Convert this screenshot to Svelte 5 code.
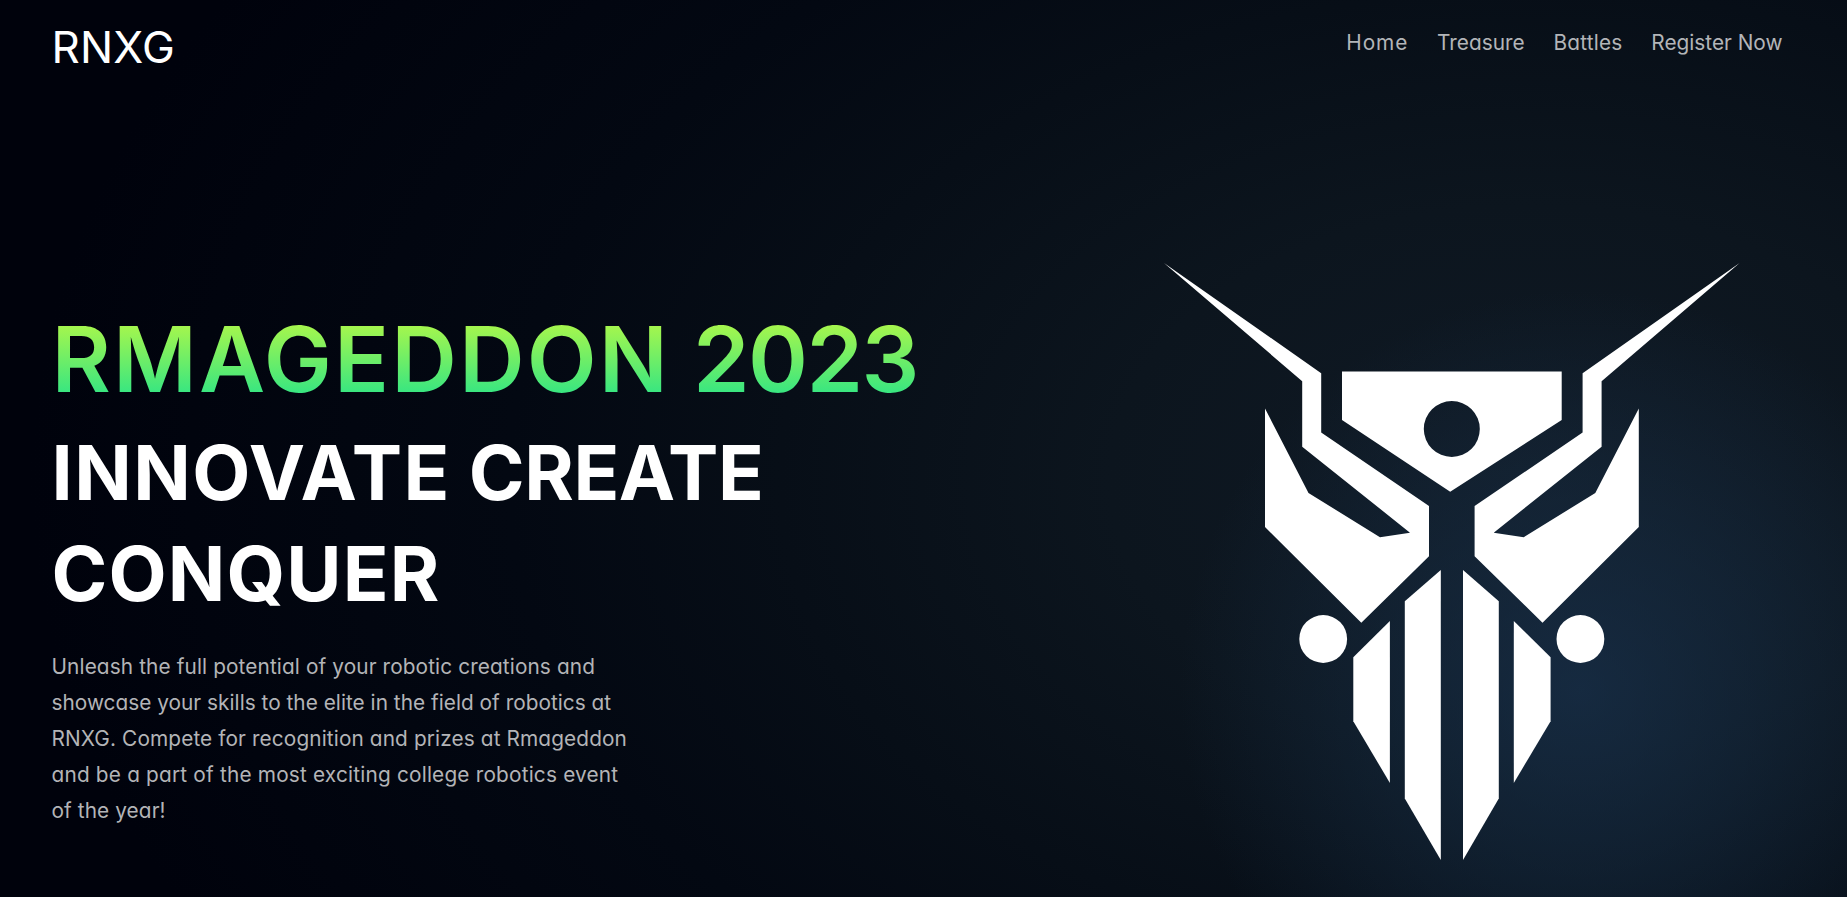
<script>
  const links = [
    { label: 'Home', track: 0.9 },
    { label: 'Treasure', track: 0 },
    { label: 'Battles', track: 0.2 },
    { label: 'Register Now', track: 0 }
  ];
  const slogan = [
    [
      { text: 'INNOVATE', track: 1.45 },
      { text: 'CREATE', track: -0.4 }
    ],
    [{ text: 'CONQUER', track: 1.15 }]
  ];
  const intro = [
    { text: 'Unleash the full potential of your robotic creations and', track: 0.11 },
    { text: 'showcase your skills to the elite in the field of robotics at', track: 0.02 },
    { text: 'RNXG. Compete for recognition and prizes at Rmageddon', track: 0.115 },
    { text: 'and be a part of the most exciting college robotics event', track: 0.19 },
    { text: 'of the year!', track: 0.09 }
  ];
</script>

<div class="page">
  <header>
    <div class="logo">RNXG</div>
    <nav>
      {#each links as link}
        <a href="#top" style="letter-spacing: {link.track}px">{link.label}</a>
      {/each}
    </nav>
  </header>
  <main>
    <section class="copy">
      <h1><span class="name">RMAGEDDON</span> <span class="year">2023</span></h1>
      <h2>
        {#each slogan as line}
          <span class="line">
            {#each line as word}
              <span style="letter-spacing: {word.track}px">{word.text}</span>{' '}
            {/each}
          </span>
        {/each}
      </h2>
      <p>
        {#each intro as line}
          <span class="line" style="letter-spacing: {line.track}px">{line.text}</span>
        {/each}
      </p>
    </section>
    <svg class="emblem" viewBox="1164 263 576 598" width="576" height="598" fill="#fff" aria-hidden="true">
      <path d="M1164 263L1321.2 373.2V432.5L1429 506V556.3L1361.3 622.7L1265 527V408.5L1308.5 493L1380 537.2L1410 532.7L1302.2 446.7V381.2Z" />
      <path d="M1739.6 263L1582.6 373.2V432.5L1474.6 506V556.3L1542.5 622.7L1638.8 527V408.5L1595.3 493L1523.7 537.2L1493.7 532.7L1601.6 446.7V381.2Z" />
      <path fill-rule="evenodd" d="M1342 371.4H1561.7V420L1450.2 491.8L1342 420ZM1451.8 401A28 28 0 1 0 1451.8 457A28 28 0 1 0 1451.8 401Z" />
      <circle cx="1323.2" cy="639" r="23.9" />
      <circle cx="1580.4" cy="639" r="23.9" />
      <path d="M1389.9 621V783L1353.3 721.2V657.3Z" />
      <path d="M1440.8 570V860L1404.8 798.5V601.3Z" />
      <path d="M1463 570L1498.8 601.3V798.5L1463 860Z" />
      <path d="M1513.8 621L1550.6 657.3V721.2L1513.8 783Z" />
    </svg>
  </main>
</div>

<style>
  :global(body) {
    margin: 0;
    background: #00020c;
  }
  .page {
    height: 897px;
    overflow: hidden;
    box-sizing: border-box;
    font-family: Inter, sans-serif;
    font-feature-settings: 'cv11';
    color: #fff;
    background:
      radial-gradient(ellipse 400px 400px at 1580px 690px, rgba(27, 54, 84, 0.62), rgba(25, 50, 76, 0.42) 45%, rgba(22, 42, 66, 0) 100%),
      radial-gradient(ellipse 1500px 980px at 1530px 480px, #101a25 0%, #0c151e 28%, #070e17 50%, #030812 68%, #00020c 100%);
  }
  header {
    display: flex;
    justify-content: space-between;
    height: 100px;
    padding: 0 64.5px 0 51.5px;
    box-sizing: border-box;
  }
  .logo {
    margin-top: 17px;
    font-size: 44px;
    line-height: 60px;
    letter-spacing: 0.2px;
  }
  nav {
    display: flex;
    gap: 28.9px;
    margin-top: 28px;
  }
  nav a {
    color: #b3b5b8;
    font-size: 20.8px;
    line-height: 30px;
    text-decoration: none;
  }
  main {
    display: flex;
    justify-content: space-between;
    padding: 163px 107px 0 51.5px;
  }
  .copy {
    padding-top: 41px;
  }
  h1 {
    margin: 0;
    font-size: 91px;
    font-weight: 600;
    line-height: 110px;
    color: transparent;
    background: linear-gradient(#acf74a 17px, #3ae680 88px);
    background-clip: text;
    -webkit-background-clip: text;
  }
  .name {
    letter-spacing: 2.1px;
  }
  .year {
    letter-spacing: -1.6px;
  }
  h2 {
    margin: 8px 0 25px;
    font-size: 75.5px;
    font-weight: 700;
    line-height: 101px;
  }
  .line {
    display: block;
    white-space: nowrap;
  }
  p {
    margin: 0;
    color: #b3b4b7;
    font-size: 20.8px;
    line-height: 36.1px;
  }
</style>
